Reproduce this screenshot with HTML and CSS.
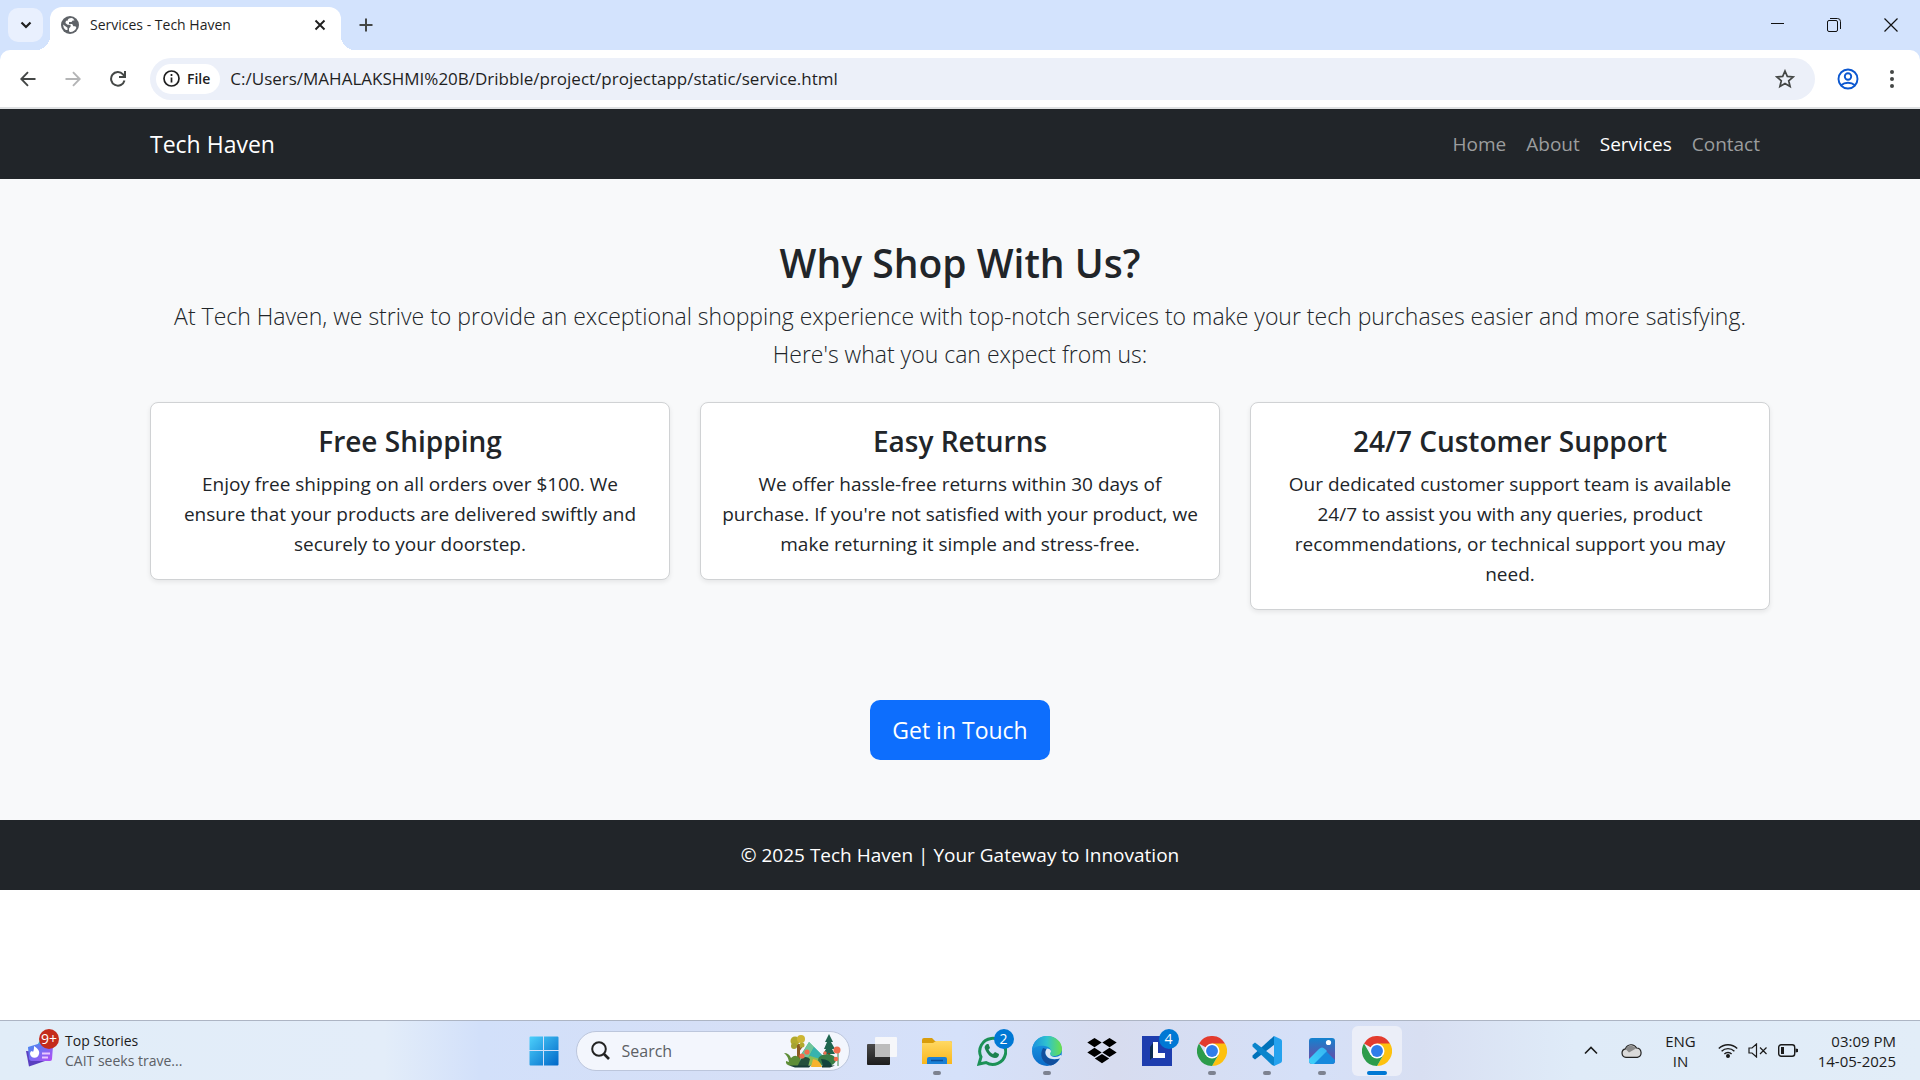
FILE: index.html
```html
<!DOCTYPE html>
<html lang="en">
<head>
<meta charset="utf-8">
<meta name="viewport" content="width=device-width, initial-scale=1">
<title>Services - Tech Haven</title>
<link rel="stylesheet" href="styles.css">
</head>
<body>
<svg class="defs" width="0" height="0" aria-hidden="true">
  <defs>
    <linearGradient id="win" x1="0" y1="0" x2="1" y2="1"><stop offset="0" stop-color="#4cd0fb"/><stop offset="1" stop-color="#0067c8"/></linearGradient>
    <linearGradient id="folder" x1="0" y1="0" x2="0" y2="1"><stop offset="0" stop-color="#ffd964"/><stop offset="1" stop-color="#f9b61c"/></linearGradient>
    <linearGradient id="edgeTop" x1="0" y1="0" x2="1" y2="0"><stop offset="0" stop-color="#1b8fe0"/><stop offset=".5" stop-color="#2fc3cf"/><stop offset="1" stop-color="#6be04a"/></linearGradient>
    <linearGradient id="edgeLeft" x1="0" y1="0" x2="0" y2="1"><stop offset="0" stop-color="#1ca0e6"/><stop offset="1" stop-color="#0b6bc9"/></linearGradient>
    <linearGradient id="photo" x1="0" y1="0" x2="0" y2="1"><stop offset="0" stop-color="#1483cf"/><stop offset=".7" stop-color="#5a55ad"/><stop offset="1" stop-color="#6a50ab"/></linearGradient>
    <linearGradient id="peak" x1="1" y1="0" x2="0" y2="1"><stop offset="0" stop-color="#36b4f2"/><stop offset="1" stop-color="#3fd2fa"/></linearGradient>
    <linearGradient id="news" x1="0" y1="0" x2="1" y2="1"><stop offset="0" stop-color="#3f8df0"/><stop offset="1" stop-color="#b44cf5"/></linearGradient>
    <linearGradient id="dark" x1="0" y1="0" x2="0" y2="1"><stop offset="0" stop-color="#4a4a4a"/><stop offset="1" stop-color="#1d1d1d"/></linearGradient>
    <symbol id="chrome" viewBox="0 0 48 48">
      <path fill="#e33b2e" d="M24 24 3.200 12A24 24 0 0 1 44.800 12Z"/>
      <path fill="#fdc10f" d="M24 24V12H44.800A24 24 0 0 1 24 48L34.400 30Z"/>
      <path fill="#2c9c4b" d="M24 24 34.400 30 24 48A24 24 0 0 1 3.200 12L13.600 30Z"/>
      <circle cx="24" cy="24" r="12" fill="#fff"/><circle cx="24" cy="24" r="9.500" fill="#2f7de9"/>
    </symbol>
  </defs>
</svg>

<div class="window">
  <header class="browser">
    <div class="tabstrip">
      <button class="tab-search" aria-label="Search tabs"><svg width="12" height="8" viewBox="0 0 12 8"><path d="M1.500 1.500 6 6l4.500-4.500" fill="none" stroke="#1f1f1f" stroke-width="2.200"/></svg></button>
      <div class="tab">
        <svg width="18" height="18" viewBox="0 0 18 18"><circle cx="9" cy="9" r="9" fill="#5f6368"/><path fill="#fff" d="M10.500 2C8 2 6.600 3.200 6.600 4.700H5L4.400 7l2.200 1.800h3v1.800L8 12.500v2.800L9 16c2.600.2 5.500-1.500 6.400-4.200l-1-1.600h-2L11.200 8H8V6h2.500l1.200-1.600h1.800L12 2.400ZM2 8.500l4.500 3.200V14H4.800A7 7 0 0 1 2 8.500Z"/></svg>
        <span class="tab-title">Services - Tech Haven</span>
        <button class="plain" aria-label="Close tab"><svg width="12" height="12" viewBox="0 0 12 12"><path d="m1.500 1.500 9 9m0-9-9 9" stroke="#1f1f1f" stroke-width="1.900"/></svg></button>
      </div>
      <button class="plain new-tab" aria-label="New tab"><svg width="14" height="14" viewBox="0 0 14 14"><path d="M7 .5v13M.5 7h13" stroke="#444746" stroke-width="2"/></svg></button>
      <div class="window-controls">
        <button class="plain" aria-label="Minimize"><svg width="14" height="14" viewBox="0 0 14 14"><path d="M1 5.500h13" stroke="#111"/></svg></button>
        <button class="plain" aria-label="Restore"><svg width="14" height="14" viewBox="0 0 14 14" fill="none" stroke="#111"><rect x=".5" y="2.500" width="10" height="11" rx="1.500"/><path d="M3 .5h7.500a3 3 0 0 1 3 3V11"/></svg></button>
        <button class="plain" aria-label="Close"><svg width="14" height="14" viewBox="0 0 14 14"><path d="m.5.500 13 13m0-13-13 13" stroke="#111" stroke-width="1.200"/></svg></button>
      </div>
    </div>
    <div class="toolbar">
      <div class="nav-buttons">
        <button class="plain" aria-label="Back"><svg width="16" height="16" viewBox="0 0 16 16" fill="none" stroke="#444746" stroke-width="1.900"><path d="M15.500 8H1.500M8 1.200 1.300 8 8 14.800"/></svg></button>
        <button class="plain" aria-label="Forward"><svg width="16" height="16" viewBox="0 0 16 16" fill="none" stroke="#b4b5b6" stroke-width="1.900"><path d="M.5 8h14M8 1.200 14.700 8 8 14.800"/></svg></button>
        <button class="plain" aria-label="Reload"><svg width="16" height="16" viewBox="0 0 16 16" fill="none" stroke="#444746" stroke-width="2"><path d="M14.500 9.500A6.800 6.800 0 1 1 13 3.300L14.800 5.500M15 0v6H9"/></svg></button>
      </div>
      <div class="omnibox">
        <button class="file-chip"><svg width="17" height="17" viewBox="0 0 17 17"><circle cx="8.500" cy="8.500" r="7.500" fill="none" stroke="#1f1f1f" stroke-width="1.700"/><path d="M8.500 7.500v5M8.500 4v2" stroke="#1f1f1f" stroke-width="1.700"/></svg>File</button>
        <input class="address" type="text" aria-label="Address" value="C:/Users/MAHALAKSHMI%20B/Dribble/project/projectapp/static/service.html">
        <button class="plain" aria-label="Bookmark this page"><svg width="20" height="20" viewBox="0 0 20 20"><path d="m10 2 2.300 5.400 5.900.5-4.500 3.900 1.400 5.700L10 14.500l-5.100 3 1.400-5.700L1.800 7.900l5.900-.5Z" fill="none" stroke="#444746" stroke-width="1.700"/></svg></button>
      </div>
      <button class="plain" aria-label="Profile"><svg width="22" height="22" viewBox="0 0 22 22" fill="none" stroke="#0b57d0" stroke-width="1.900"><circle cx="11" cy="11" r="9.500"/><circle cx="11" cy="8.500" r="3.200"/><path d="M4 17.200c4-3.300 10-3.300 14 0"/></svg></button>
      <button class="plain menu" aria-label="Menu"><svg width="4" height="18" viewBox="0 0 4 18" fill="#444746"><circle cx="2" cy="2" r="2"/><circle cx="2" cy="9" r="2"/><circle cx="2" cy="16" r="2"/></svg></button>
    </div>
  </header>

  <div class="page">
    <nav class="navbar">
      <div class="container navbar-row">
        <a class="brand" href="#">Tech Haven</a>
        <div class="nav-links">
          <a href="#">Home</a><a href="#">About</a><a href="#" class="active">Services</a><a href="#">Contact</a>
        </div>
      </div>
    </nav>
    <main class="content">
      <section class="container services">
        <h2>Why Shop With Us?</h2>
        <p class="lead">At Tech Haven, we strive to provide an exceptional shopping experience with top-notch services to make your tech purchases easier and more satisfying. Here's what you can expect from us:</p>
        <div class="cards">
          <article class="card"><h4>Free Shipping</h4><p>Enjoy free shipping on all orders over $100. We ensure that your products are delivered swiftly and securely to your doorstep.</p></article>
          <article class="card"><h4>Easy Returns</h4><p>We offer hassle-free returns within 30 days of purchase. If you're not satisfied with your product, we make returning it simple and stress-free.</p></article>
          <article class="card"><h4>24/7 Customer Support</h4><p>Our dedicated customer support team is available 24/7 to assist you with any queries, product recommendations, or technical support you may need.</p></article>
        </div>
      </section>
      <section class="cta"><a class="btn" href="#">Get in Touch</a></section>
    </main>
    <footer class="footer">© 2025 Tech Haven | Your Gateway to Innovation</footer>
  </div>

  <div class="taskbar">
    <button class="widget">
      <span class="widget-icon">
        <svg width="30" height="34" viewBox="0 0 30 34"><path d="M12 12 16 4l10 2v10Z" fill="#2cc0d8"/><path d="m1 17 3 15.500L20 27l-2-9Z" fill="#5a3fc0"/><path d="M3 13 16 9l12 3-1 13a2 2 0 0 1-2 2H7a3 3 0 0 1-3-2Z" fill="url(#news)"/><path d="M9 12c4 3 6 5 5 8a4.600 4.600 0 0 1-9 0c0-2 1-3 2-3l1 1c1-2 1-4 1-6Z" fill="#fff"/><path d="M17 19.500h8M17 23.500h6" stroke="#e9c8ff" stroke-width="1.800"/></svg>
        <span class="badge badge-red">9+</span>
      </span>
      <span class="widget-text"><span>Top Stories</span><span class="muted">CAIT seeks trave...</span></span>
    </button>

    <div class="apps">
      <button class="app" aria-label="Start"><svg width="30" height="30" viewBox="0 0 30 30"><path fill="url(#win)" d="M1.500.500H14V14H.5V1.500a1 1 0 0 1 1-1ZM15 .5h13.500a1 1 0 0 1 1 1V14H15ZM.5 15H14v14.500H1.500a1 1 0 0 1-1-1ZM15 15h14.500v13.500a1 1 0 0 1-1 1H15Z"/></svg></button>
      <label class="search">
        <svg width="19" height="19" viewBox="0 0 19 19" fill="none" stroke="#222" stroke-width="2"><circle cx="8" cy="8" r="6.800"/><path d="m13 13 5 5" stroke-width="2.600"/></svg>
        <input type="text" placeholder="Search" aria-label="Search">
        <svg width="58" height="34" viewBox="0 0 58 34"><path d="M12 30 26 8l14 14 6 10Z" fill="#3eb08e"/><path d="m26 8 5 5-9 16-7-2Z" fill="#6fc59a"/><path d="m31 13 10 10-8 5-6-7Z" fill="#37b3ae"/><path d="m18 31 9-9 10 3-3 7Z" fill="#8cbf55"/><path d="M14 10h3v20h-3Z" fill="#8b5a22"/><path d="m15 18 5-7M15 14l-4-5" stroke="#8b5a22" stroke-width="1.500"/><circle cx="12" cy="7" r="4.500" fill="#b2a92d"/><circle cx="18" cy="5" r="4" fill="#cdb634"/><circle cx="11" cy="12" r="3" fill="#a5a231"/><circle cx="19" cy="11" r="2.500" fill="#b2a92d"/><path d="m46 0 4 8-2 0 4 7h-3l3 5H40l3-5h-2l3-7h-2Z" fill="#1f6650"/><path d="M45 19h2v10h-2Z" fill="#70451d"/><path d="M1 19q5 0 7 5 5-5 9 1v7H8Q2 31 3 27l3 1q-1-6-5-9Z" fill="#5d8d37"/><path d="M18 25q5-4 9 0l-2 8H14Z" fill="#244f3b"/><ellipse cx="44" cy="26" rx="9" ry="6" fill="#397d46"/><path d="M38 25q9 0 11 7h-9Z" fill="#12443c"/><path d="m28 33 2-8q7 1 9 8Z" fill="#f7b22c"/><path d="M55 15v17" stroke="#38834d"/><g fill="#f06e4d"><circle cx="19" cy="22" r="2.600"/><circle cx="24" cy="18" r="2.600"/><circle cx="54" cy="16" r="3.500"/><circle cx="53" cy="25" r="2.300"/><circle cx="42" cy="19" r="1.700"/></g><path d="M6 31.500h22l-2 2H12ZM39 31.500h13l-5 2h-8Z" fill="#173c36"/></svg>
      </label>
      <button class="app" aria-label="Task view"><svg width="30" height="30" viewBox="0 0 30 30"><rect y="8" width="23" height="21" rx="1" fill="url(#dark)"/><rect x="8" y="1" width="22" height="20" rx="1" fill="#fafafa" opacity=".9"/><path d="M8 8h15v13H8Z" fill="#bcbcbc"/></svg></button>
      <button class="app running" aria-label="File Explorer"><svg width="30" height="30" viewBox="0 0 30 30"><path d="M0 4a2 2 0 0 1 2-2h8l3 3h15a2 2 0 0 1 2 2v5H0Z" fill="#d99d0c"/><path d="M0 7h11l3-2h14a2 2 0 0 1 2 2v21H0Z" fill="url(#folder)"/><path d="M5 28v-5a2 2 0 0 1 2-2h16a2 2 0 0 1 2 2v5Z" fill="#1a80d6"/><path d="M9 24.500h12" stroke="#0b4f99" stroke-width="1.500"/></svg></button>
      <button class="app" aria-label="WhatsApp"><svg width="30" height="30" viewBox="0 0 30 30"><path d="m2 28 2-7A13 13 0 1 1 9 26.500Z" fill="none" stroke="#1c9157" stroke-width="3"/><path d="M10 8c-2 1-3 3-2 5 2 5 6 9 10 9 3 0 4-2 4-4l-4-2-2 2c-2-1-3.500-2.500-4.500-4.500L13 12l-1.500-4Z" fill="#1c8250"/></svg><span class="badge badge-blue">2</span></button>
      <button class="app running" aria-label="Edge"><svg width="30" height="30" viewBox="0 0 30 30"><circle cx="15" cy="15" r="15" fill="url(#edgeLeft)"/><path d="M0 14C1 5 7 0 15 0c9 0 15 6 15 13 0 5-4 7-8 7-3 0-5-1-4-3 2-3 0-6-5-7-5-1-10 0-13 4Z" fill="url(#edgeTop)"/><path d="M11 12c-4 7-1 15 8 17.500 4-1 7-4 8.500-7-3 1.500-8 1.500-11-.5-4-2.500-4-6-1.500-8.500Z" fill="#114f9d"/><path d="M15 12.500c2 0 4 1 4 3 0 1-1 1-1 2 0 2 2 3.500 5 3.500 2 0 4-1 5.500-2 2 0 0 4-1 3.500-3 1-9 1-11.500-1-3-2.500-3.500-6-1-9Z" fill="#dce6f6"/></svg></button>
      <button class="app" aria-label="Dropbox"><svg width="30" height="26" viewBox="0 0 30 26"><path d="m7.500 0 7.200 4.600-7.200 4.600L.3 4.600ZM22.500 0l7.200 4.600-7.200 4.600-7.200-4.600ZM7.500 9.800l7.200 4.600L7.500 19 .3 14.400ZM22.500 9.800l7.200 4.600-7.200 4.600-7.200-4.600ZM15 16l7.200 4.600L15 25.200l-7.200-4.600Z"/></svg></button>
      <button class="app" aria-label="L app"><svg width="30" height="30" viewBox="0 0 30 30"><path fill="#1e3dae" d="M0 0h30v30H0Z"/><path d="m11 7-3 4v13l2-2h12v-4l-7-1Z" fill="#0a2b50"/><path d="M11 6h5v11h7v5H11Z" fill="#fff"/></svg><span class="badge badge-blue">4</span></button>
      <button class="app running" aria-label="Chrome"><svg width="30" height="30"><use href="#chrome"/></svg></button>
      <button class="app running" aria-label="Visual Studio Code"><svg width="30" height="30" viewBox="0 0 30 30"><path d="M22 0 .5 19.500v2L3 23.500 22.500 8.500Z" fill="#0072ba"/><path d="M3 6.500.5 8.500v2L20 29l2.500 1v-8.500Z" fill="#0b85cc"/><path d="m22 0 6.500 3A2.500 2.500 0 0 1 30 5v20a2.500 2.500 0 0 1-1.500 2L22 30Z" fill="#25a2ee"/></svg></button>
      <button class="app running" aria-label="Photos"><svg width="26" height="26" viewBox="0 0 26 26"><rect width="26" height="26" rx="3" fill="url(#photo)"/><path d="M2 25 11 12q2-3 5 0l10 10v1a3 3 0 0 1-3 3H3Z" fill="#1689dd"/><path d="M0 21 10 11q3-3 6 0l2 2L5 26H3a3 3 0 0 1-3-3Z" fill="url(#peak)"/><circle cx="19.500" cy="4.500" r="2.600" fill="#fff"/></svg></button>
      <button class="app running current" aria-label="Chrome, current window"><svg width="30" height="30"><use href="#chrome"/></svg></button>
    </div>

    <div class="tray">
      <button class="plain" aria-label="Hidden icons"><svg width="14" height="9" viewBox="0 0 14 9"><path d="M1 7.500 7 1.500l6 6" fill="none" stroke="#1b1b1b" stroke-width="1.600"/></svg></button>
      <svg class="cloud" width="21" height="14" viewBox="0 0 21 14"><path d="M5 13.300a4.300 4.300 0 0 1-.5-8.500A6 6 0 0 1 15.500 4a4.700 4.700 0 0 1 .8 9.300Z" fill="#dadada" stroke="#222" stroke-width="1.200"/><path d="M4.500 5A6 6 0 0 1 15 4.500L8 8.500Z" fill="#8a8a8a"/></svg>
      <span class="lang">ENG<br>IN</span>
      <span class="status">
        <svg width="20" height="15" viewBox="0 0 20 15" fill="none" stroke="#1b1b1b" stroke-width="1.400"><path d="M.8 5.500a13 13 0 0 1 18.400 0M3.600 8.300a9 9 0 0 1 12.800 0M6.400 11a5 5 0 0 1 7.200 0"/><circle cx="10" cy="13" r="1.300" fill="#1b1b1b"/></svg>
        <svg width="20" height="15" viewBox="0 0 20 15" fill="none" stroke="#1b1b1b" stroke-width="1.200"><path d="M1 5h3l4.500-4v13L4 10H1ZM12 4.500l6.500 6.500m0-6.500L12 11"/></svg>
        <svg width="20" height="13" viewBox="0 0 20 13"><rect x=".7" y=".7" width="16" height="11.600" rx="2.500" fill="none" stroke="#1b1b1b" stroke-width="1.400"/><path d="M3 3h3v7H3ZM17.500 4.500l2.500.5v3l-2.500.5Z" fill="#1b1b1b"/></svg>
      </span>
      <span class="clock">03:09 PM<br>14-05-2025</span>
    </div>
  </div>
</div>
</body>
</html>
```
FILE: styles.css
```css
* { box-sizing: border-box; }

body {
  margin: 0;
  background: #fff;
  color: #212529;
  font-family: "Open Sans", "Noto Sans", sans-serif;
  font-size: 19px;
  line-height: 30px;
}

h2, h4, p { margin: 0; }
a { color: inherit; text-decoration: none; }
button, input { font: inherit; color: inherit; }
button { padding: 0; border: 0; cursor: pointer; }
input { border: 0; padding: 0; background: none; outline: none; min-width: 0; }
svg { display: block; flex: none; }
.defs { position: absolute; }
.plain { background: none; display: grid; place-items: center; }

.window { min-height: 100vh; display: flex; flex-direction: column; }

/* Browser frame */
.browser { background: #d3e3fd; border-bottom: 2px solid #dfe1e3; }
.tabstrip { display: flex; align-items: center; height: 50px; padding-left: 8px; }
.tab-search {
  width: 35px; height: 34px; border-radius: 10px;
  background: #e9f0fe; display: grid; place-items: center;
}
.tab {
  position: relative;
  align-self: flex-end;
  display: flex; align-items: center; gap: 11px;
  width: 291px; height: 43px;
  margin-left: 7px; padding: 0 15px 7px 11px;
  border-radius: 12px 12px 0 0;
  background: #fff;
  color: #1f1f1f; font-size: 14px;
}
.tab::before, .tab::after {
  content: ""; position: absolute; bottom: 0; width: 14px; height: 14px;
}
.tab::before { right: 100%; background: radial-gradient(circle at 0 0, transparent 14px, #fff 14px); }
.tab::after { left: 100%; background: radial-gradient(circle at 100% 0, transparent 14px, #fff 14px); }
.tab-title { flex: 1; }
.new-tab { margin-left: 18px; }
.window-controls { display: flex; gap: 43px; margin-left: auto; padding-right: 22px; }

.toolbar {
  display: flex; align-items: center; gap: 22px;
  height: 57px; padding: 0 26px 0 20px;
  background: #fff; border-radius: 10px 10px 0 0;
}
.nav-buttons { display: flex; gap: 29px; padding-right: 2px; }
.omnibox {
  flex: 1; display: flex; align-items: center; gap: 10px;
  height: 42px; padding: 0 20px 0 6px;
  border-radius: 21px; background: #ecf0f9;
}
.file-chip {
  display: flex; align-items: center; gap: 7px;
  height: 30px; padding: 0 10px 0 7px;
  border-radius: 15px; background: #fff;
  color: #1f1f1f; font-size: 14px; font-weight: 600;
}
.address { flex: 1; color: #1f1f1f; font-size: 17px; }
.menu { margin-left: 9px; }

/* Site */
.page { flex: 1; }
.container { max-width: 1650px; margin: 0 auto; padding: 0 15px; }
.navbar { background: #212529; color: #fff; }
.navbar-row { display: flex; justify-content: space-between; align-items: center; height: 70px; }
.brand { font-size: 23px; }
.nav-links { display: flex; color: #9b9d9e; }
.nav-links a { padding: 10px; }
.nav-links .active { color: #fff; }

.content { background: #f8f9fa; text-align: center; }
.services { padding-top: 60px; padding-bottom: 90px; }
.services h2 { margin-bottom: 10px; font-size: 39px; font-weight: 600; line-height: 48px; }
.lead { margin-bottom: 29px; font-size: 23px; font-weight: 300; line-height: 38px; }
.cards { display: grid; grid-template-columns: repeat(3, 1fr); gap: 30px; align-items: start; }
.card {
  padding: 20px;
  border: 1px solid #d0d2d4; border-radius: 8px;
  background: #fff; box-shadow: 0 2px 5px rgba(0, 0, 0, .08);
}
.card h4 { margin-bottom: 10px; font-size: 28px; font-weight: 600; line-height: 36px; }
.cta { padding-bottom: 60px; display: flex; justify-content: center; }
.btn {
  padding: 11px 22px; border-radius: 10px;
  background: #0d6efd; color: #fff;
  font-size: 23px; line-height: 38px;
}
.footer { padding: 20px; background: #212529; color: #fff; text-align: center; }

/* Taskbar */
.taskbar {
  display: grid; grid-template-columns: 1fr auto 1fr; align-items: center;
  height: 60px; border-top: 1px solid #adb5c4;
  background: linear-gradient(90deg, #e1edf8 0, #e3edf9 20%, #d2e0fa 25%, #d6dff6 40%, #d5e1fa 50%, #d7dcef 58%, #d5e0f8 68%, #d8dff2 74%, #dfebf8 82%, #e2edf8 100%);
  color: #1b1b1b; font-size: 14px; line-height: 20px;
}
.widget { display: flex; align-items: center; gap: 10px; padding-left: 25px; background: none; text-align: left; }
.widget-icon { position: relative; }
.widget-text { display: grid; }
.muted { color: #5c6065; }
.badge {
  position: absolute; top: -5px; right: -4px;
  width: 20px; height: 20px; border-radius: 50%;
  color: #fff; font-size: 14px; line-height: 20px; text-align: center;
}
.badge-red { background: #c42b1c; }
.badge-blue { top: 3px; right: 3px; background: #0078d4; }

.apps { display: flex; align-items: center; gap: 5px; }
.app {
  position: relative;
  width: 50px; height: 50px; border-radius: 6px;
  background: none; display: grid; place-items: center;
}
.running::after {
  content: ""; position: absolute; bottom: 1px; left: 21px;
  width: 8px; height: 4px; border-radius: 2px; background: #7d8290;
}
.current { background: #ebeef8; }
.current::after { left: 15px; width: 20px; background: #0078d4; }
.search {
  display: flex; align-items: center; gap: 12px;
  width: 274px; height: 40px; margin: 0 2px; padding: 0 8px 0 14px;
  border: 1px solid #bcc6dc; border-radius: 20px; background: #f3f6fd;
}
.search input { flex: 1; font-size: 16px; }
.search input::placeholder { color: #5c6065; opacity: 1; }

.tray {
  display: flex; align-items: center; justify-content: flex-end;
  padding-right: 24px; font-size: 15px; text-align: center;
}
.cloud { margin-left: 23px; }
.lang { margin-left: 23px; }
.status { display: flex; align-items: center; gap: 10px; margin: 0 20px 0 22px; }
.clock { text-align: right; }
```
